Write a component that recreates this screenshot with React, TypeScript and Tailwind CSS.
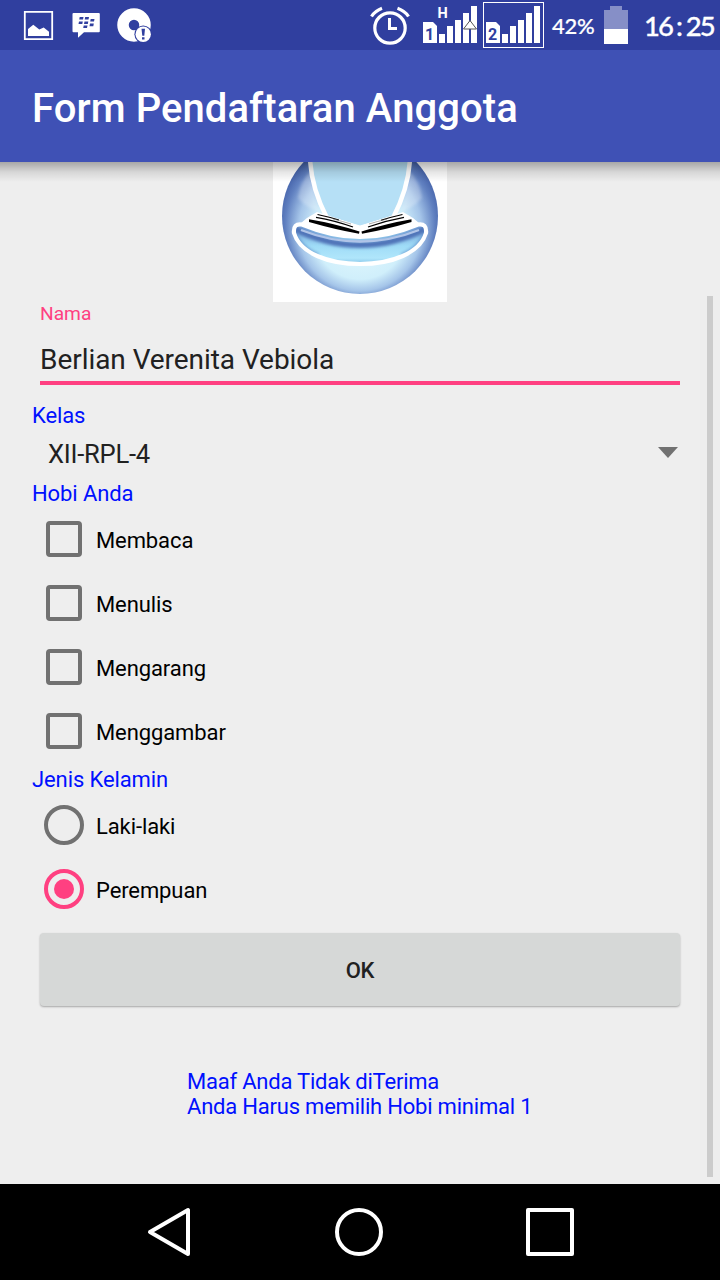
import type { ReactNode } from "react";

const hobbies = ["Membaca", "Menulis", "Mengarang", "Menggambar"];

function SignalBars({ sim }: { sim: string }) {
  return (
    <svg width="56" height="44" viewBox="0 0 56 44" className="block">
      <path d="M0 20h10l4 4v17H0z" fill="#fff" />
      <text x="6.5" y="37.5" textAnchor="middle" fontSize="16" fontWeight="700" fill="#303f9f" fontFamily="Roboto, sans-serif">
        {sim}
      </text>
      <path d="M16 32h6v9h-6zM24 24h6v17h-6zM32 18h6v23h-6zM40 11h6v30h-6zM48 4h6v37h-6z" fill="#fff" />
    </svg>
  );
}

function StatusBar() {
  return (
    <header className="flex h-[50px] shrink-0 items-start bg-[#303f9f] text-white">
      <svg width="160" height="50" viewBox="0 0 160 50">
        <path d="M24.8 11.8h27.4v27.4H24.8z" fill="none" stroke="#fff" strokeWidth="1.8" />
        <path d="M28 36V29l5.3-4.2 6 4.8 4.4-2 5.3 4.2V36z" fill="#fff" />
        <path d="M73.5 13h25.3q1 0 1 1v17.3q0 1-1 1H84l-6 5.4v-5.4h-4.5q-1 0-1-1V14q0-1 1-1z" fill="#fff" />
        <path
          d="M79.7 17h3.8l-.5 2.6h-3.800zM85.200 17h3.800l-.5 2.600h-3.800zM79 21.400h3.800l-.5 2.600h-3.800zM84.500 21.400h3.800l-.5 2.600h-3.800zM90.700 19h3.800l-.5 2.600h-3.800zM90 23.600h3.800l-.5 2.600h-3.800zM83.700 25.500h3.800l-.5 2.600h-3.800z"
          fill="#303f9f"
        />
        <circle cx="134" cy="25" r="11" fill="none" stroke="#fff" strokeWidth="11.500" />
        <circle cx="143.200" cy="34.300" r="8.800" fill="#303f9f" />
        <circle cx="143.200" cy="34.300" r="7.700" fill="#fff" />
        <path d="M141.500 28.800h3.500l-.7 7h-2zM142 37.200h2.500v2.400H142z" fill="#303f9f" />
      </svg>
      <div className="flex-1" />
      <svg width="44" height="50" viewBox="0 0 44 50" className="mr-[9px]">
        <circle cx="20" cy="28" r="15.200" fill="none" stroke="#fff" strokeWidth="3.200" />
        <path d="M19.500 18v10.500H27" fill="none" stroke="#fff" strokeWidth="3" />
        <path d="M1.500 16.500Q5 11 12 8.300M27.500 8.300Q35 11 38.500 16.500" fill="none" stroke="#fff" strokeWidth="3.200" />
      </svg>
      <div className="relative mt-[2px] mr-1 w-[56px]">
        <SignalBars sim="1" />
        <svg width="56" height="44" viewBox="0 0 56 44" className="absolute inset-0">
          <text x="19.500" y="15.700" textAnchor="middle" fontSize="14.500" fontWeight="700" fill="#fff" fontFamily="Roboto, sans-serif">
            H
          </text>
          <path d="M47 18.500l6.500 8.500h-13z" fill="#fff" stroke="#555" strokeWidth="1" />
        </svg>
      </div>
      <div className="mt-[2px] mr-[7px] h-[46px] w-[61px] border border-white pl-[2px]">
        <div className="-mt-px">
          <SignalBars sim="2" />
        </div>
      </div>
      <span className="mt-[12px] ml-px w-[45px] whitespace-nowrap font-['Lato',sans-serif] text-[22px] leading-7 font-medium tracking-[-0.2px] [-webkit-text-stroke:0.2px_white]">
        42%
      </span>
      <svg width="24" height="50" viewBox="0 0 24 50" className="ml-[7px]">
        <path d="M6 6h12v4h6v19H0V10h6z" fill="#868fc7" />
        <path d="M0 29h24v15H0z" fill="#fff" />
      </svg>
      <span className="mt-[8px] ml-[16px] w-[76px] whitespace-nowrap font-['Lato',sans-serif] text-[27.5px] leading-9 font-medium tracking-[-2px] [-webkit-text-stroke:0.3px_white]">
        16<span className="pr-[5px] pl-[4px]">:</span>25
      </span>
    </header>
  );
}

function Logo() {
  return (
    <svg width="174" height="140" viewBox="0 0 174 140" className="block bg-white">
      <defs>
        <radialGradient id="ball" gradientUnits="userSpaceOnUse" cx="87" cy="60" r="88" fx="87" fy="84">
          <stop offset="0" stopColor="#e2f8fe" />
          <stop offset="0.52" stopColor="#d0effb" />
          <stop offset="0.7" stopColor="#a5c5e9" />
          <stop offset="0.85" stopColor="#6080c0" />
          <stop offset="1" stopColor="#34509c" />
        </radialGradient>
        <linearGradient id="bowl" x1="0" y1="0" x2="0" y2="1">
          <stop offset="0.1" stopColor="#7ba6da" />
          <stop offset="0.55" stopColor="#9fdcf7" />
          <stop offset="0.85" stopColor="#b0e6fb" />
          <stop offset="1" stopColor="#86c4e8" />
        </linearGradient>
        <filter id="soft" x="-20%" y="-50%" width="140%" height="200%">
          <feGaussianBlur stdDeviation="1.800" />
        </filter>
        <filter id="fine" x="-20%" y="-50%" width="140%" height="200%">
          <feGaussianBlur stdDeviation="0.600" />
        </filter>
        <clipPath id="bowlClip">
          <path d="M29 62.500Q59 75.500 87 75.500T145 62.500Q154 61 153 71C147 91 119 102 87 102S27 91 21 71Q20 61 29 62.500z" />
        </clipPath>
      </defs>
      <circle cx="87" cy="54" r="78" fill="url(#ball)" />
      <path d="M25 36Q27 20 37 10L46 50Q34 46 25 36zM149 36Q147 20 137 10L128 50Q140 46 149 36z" fill="#fff" opacity="0.25" filter="url(#soft)" />
      <path d="M37 -4Q38 25 54 56L87 66L120 56Q136 25 137 -4z" fill="#b6e0f6" stroke="#fff" strokeWidth="4.500" />
      <path d="M34 56L44 50L87 64L130 50L140 56L146 61Q117 76 87 76T28 61z" fill="#fff" />
      <path d="M29 62.500Q59 75.500 87 75.500T145 62.500Q154 61 153 71C147 91 119 102 87 102S27 91 21 71Q20 61 29 62.500z" fill="url(#bowl)" />
      <g clipPath="url(#bowlClip)">
        <path d="M20 66Q53 83 87 83T154 66" fill="none" stroke="#4f73b8" strokeWidth="6" filter="url(#soft)" />
        <path d="M28 68Q57 79.500 87 79.500T146 68" fill="none" stroke="#b0c4e8" strokeWidth="2.400" filter="url(#fine)" />
        <path d="M19 62Q22 84 45 94M155 62Q152 84 129 94" fill="none" stroke="#4d79bf" strokeWidth="5" opacity="0.6" filter="url(#soft)" />
      </g>
      <path d="M29 62.500Q59 75 87 75T145 62.500Q154 61 153 71C147 91 119 102 87 102S27 91 21 71Q20 61 29 62.500z" fill="none" stroke="#fff" strokeWidth="4.200" />
      <path d="M36 57.200Q62 61.500 86.500 69.500L86 71.800Q62 67.500 36 60zM138.500 57.200Q113 61.500 88.500 69.500L89 71.800Q113 67.500 138.500 60z" fill="#000" />
      <path d="M43 55.300Q62 58.500 80 65M131 55.300Q113 58.500 95 65" fill="none" stroke="#000" strokeWidth="1.300" />
      <path d="M44.500 52.500Q63 56.500 78 62M129.500 52.500Q112 56.500 96 62" fill="none" stroke="#000" strokeWidth="1.100" strokeDasharray="22 30" />
      <path d="M60 57Q70 59.500 78 62M114 57Q104 59.500 96 62" fill="none" stroke="#555" strokeWidth="0.500" />
    </svg>
  );
}

function Label({ children }: { children: ReactNode }) {
  return <h2 className="-mb-[2px] text-[22px] leading-[28px] font-normal tracking-[-0.1px] text-[#0010ff]">{children}</h2>;
}

function CheckRow({ label }: { label: string }) {
  return (
    <label className="flex h-16 items-center pl-[14px] text-[22px] leading-[26px] tracking-[-0.1px] text-black">
      <span className="size-9 rounded-[4px] border-4 border-[#717171]" />
      <span className="ml-[14px] pt-[4px]">{label}</span>
    </label>
  );
}

function RadioRow({ label, checked = false }: { label: string; checked?: boolean }) {
  return (
    <label className="flex h-16 items-center pl-3 text-[22px] leading-[26px] tracking-[-0.1px] text-black">
      {checked ? (
        <span className="flex size-10 items-center justify-center rounded-full border-4 border-[#ff4081]">
          <span className="size-5 rounded-full bg-[#ff4081]" />
        </span>
      ) : (
        <span className="size-10 rounded-full border-4 border-[#717171]" />
      )}
      <span className="ml-3 pt-[4px]">{label}</span>
    </label>
  );
}

export default function App() {
  return (
    <div className="flex h-[1280px] w-[720px] flex-col overflow-hidden bg-[#eeeeee] font-['Roboto',sans-serif]">
      <StatusBar />
      <div className="flex h-28 shrink-0 items-center bg-[#3f51b5] pt-1 pl-8">
        <h1 className="text-[40px] leading-[47px] font-medium tracking-[0.08px] whitespace-nowrap text-white">Form Pendaftaran Anggota</h1>
      </div>
      <main className="relative flex h-[1022px] shrink-0 flex-col px-8">
        <div className="absolute inset-x-0 top-0 h-5 bg-linear-to-b from-black/30 via-black/10 to-transparent" />
        <div className="flex justify-center">
          <Logo />
        </div>
        <div className="mx-2 h-[83px] border-b-4 border-[#ff4081]">
          <div className="text-[19.2px] leading-[23px] text-[#ff4081]">Nama</div>
          <div className="mt-[18px] text-[28px] leading-[34px] tracking-[-0.05px] text-[#212121]">Berlian Verenita Vebiola</div>
        </div>
        <div className="mt-[17px]">
          <Label>Kelas</Label>
        </div>
        <div className="flex h-[52px] items-center justify-between pr-[10px] pl-4 text-[25.6px] tracking-[-0.25px] text-[#212121]">
          <span>XII-RPL-4</span>
          <svg width="20" height="11" viewBox="0 0 20 11" className="mb-1">
            <path d="M0 0h20L10 11z" fill="#717171" />
          </svg>
        </div>
        <Label>Hobi Anda</Label>
        <div className="mt-px">
          {hobbies.map((hobby) => (
            <CheckRow key={hobby} label={hobby} />
          ))}
        </div>
        <div className="mt-[3px] mb-px">
          <Label>Jenis Kelamin</Label>
        </div>
        <RadioRow label="Laki-laki" />
        <RadioRow label="Perempuan" checked />
        <button className="mx-2 mt-3 h-[73px] rounded-[4px] bg-[#d6d8d7] pt-[2px] text-[22px] font-medium tracking-[-0.3px] text-[#212121] shadow-[0_1px_2px_rgba(0,0,0,0.3)]">
          OK
        </button>
        <p className="mt-[63px] ml-[155px] text-[22px] leading-[25px] tracking-[-0.21px] whitespace-nowrap text-[#0010ff]">
          Maaf Anda Tidak diTerima
          <br />
          Anda Harus memilih Hobi minimal 1
        </p>
        <div className="absolute top-[134px] right-[7px] h-[881px] w-[6px] bg-[#cccccc]" />
      </main>
      <nav className="flex h-24 shrink-0 bg-black">
        <svg width="720" height="96" viewBox="0 0 720 96" fill="none" stroke="#fff" strokeWidth="4" strokeLinejoin="round">
          <path d="M188 26v44L150 48z" />
          <circle cx="359" cy="48" r="22" />
          <path d="M528 26h44v44h-44z" />
        </svg>
      </nav>
    </div>
  );
}
